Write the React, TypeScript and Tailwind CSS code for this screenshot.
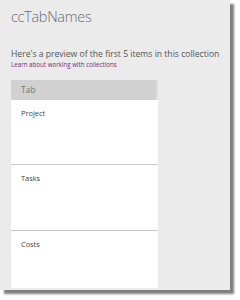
import React from 'react';

const items = [
  { name: 'Project', h: 'h-[65px]' },
  { name: 'Tasks', h: 'h-[66px]' },
  { name: 'Costs', h: 'flex-1' },
];

export default function App() {
  return (
    <div className="w-[240px] h-[300px] bg-white overflow-hidden" style={{ fontFamily: '"Open Sans", "Noto Sans", sans-serif' }}>
      {/* collection preview panel */}
      <div className="w-[230px] h-[290px] bg-[#ebebeb] shadow-[4px_4px_2px_#7f7f7f] pl-[11px] pt-[7px] flex flex-col">
        <div className="text-[14.5px] leading-[20px] font-light text-[#6b6b6b] tracking-[-0.3px]">ccTabNames</div>
        <div className="mt-[21px] text-[8.6px] leading-[12px] text-[#555] whitespace-nowrap">
          Here's a preview of the first 5 items in this collection
        </div>
        <a className="text-[6.2px] leading-[9px] text-[#7a2a7a] whitespace-nowrap">Learn about working with collections</a>

        <div className="mt-[11px] w-[147px] h-[208px] bg-white flex flex-col">
          <div className="h-[20px] bg-[#d1d1d1] border-r-2 border-[#dedede] pl-[10px] flex items-center text-[8.5px] text-[#777]">
            Tab
          </div>
          {items.map((it, idx) => (
            <div
              key={it.name}
              className={`${it.h} pl-[10px] pt-[7px] text-[7.4px] leading-[12px] text-[#444] ${idx < items.length - 1 ? 'border-b border-[#c9c9c9]' : ''}`}
            >
              {it.name}
            </div>
          ))}
        </div>
      </div>
    </div>
  );
}
